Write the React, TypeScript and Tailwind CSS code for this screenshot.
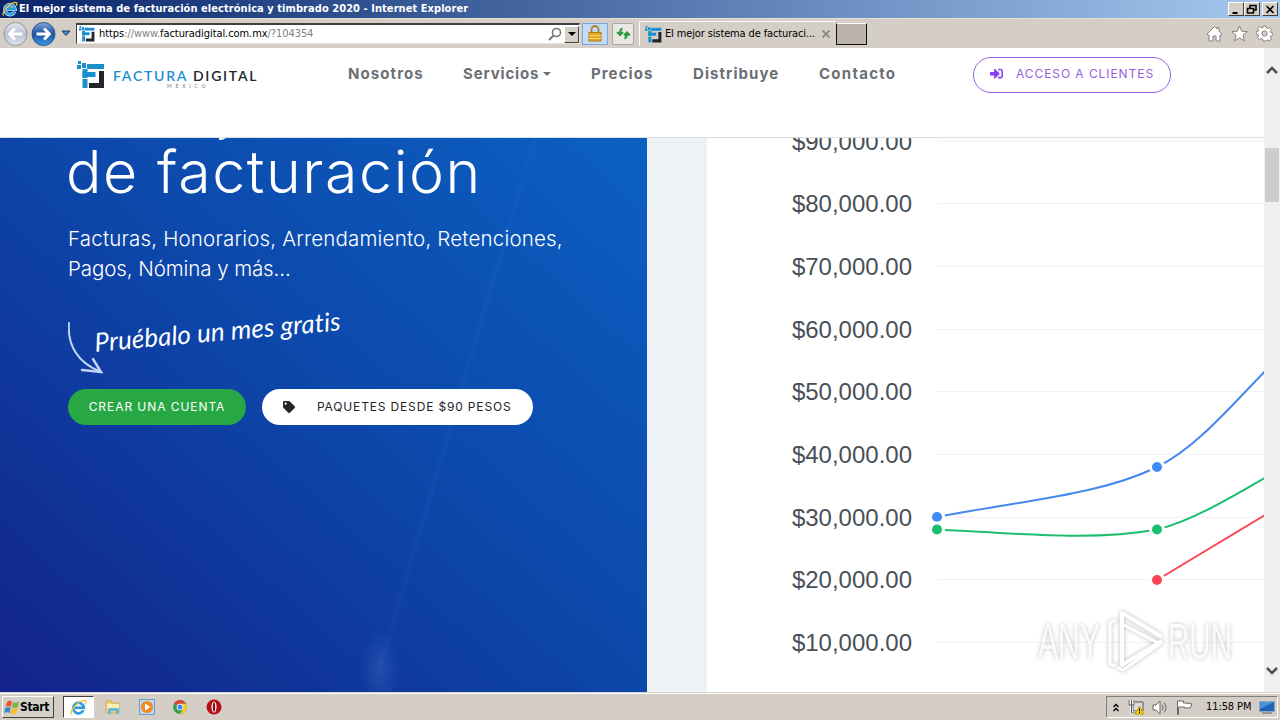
import type { ReactNode } from 'react';
import { FaSignInAlt, FaTag } from 'react-icons/fa';

const UI_FONT = 'font-["DejaVu_Sans_Condensed","DejaVu_Sans",sans-serif]';

const Y_LABELS = [
  { text: '$90,000.00', y: 141.6 },
  { text: '$80,000.00', y: 203.5 },
  { text: '$70,000.00', y: 266.5 },
  { text: '$60,000.00', y: 329.5 },
  { text: '$50,000.00', y: 391.5 },
  { text: '$40,000.00', y: 454.5 },
  { text: '$30,000.00', y: 517.5 },
  { text: '$20,000.00', y: 579.5 },
  { text: '$10,000.00', y: 642.5 },
];

const POINTS = [
  { x: 937, y: 517, color: '#3f8cf4' },
  { x: 1157, y: 467, color: '#3f8cf4' },
  { x: 937, y: 529.5, color: '#1bbf6b' },
  { x: 1157, y: 529.5, color: '#1bbf6b' },
  { x: 1157, y: 580, color: '#fb4557' },
];

function LogoMark({ size }: { size: number }) {
  return (
    <svg width={size} height={size} viewBox="0 0 28 28" className="shrink-0">
      <g fill="#1a8fd0">
        <rect x="1" y="0" width="3" height="3" />
        <rect x="0" y="4" width="4" height="4" />
        <rect x="5" y="2" width="4" height="5" />
        <rect x="10" y="3" width="17" height="5" />
        <rect x="5.500" y="8" width="5" height="9" />
        <rect x="5.500" y="11" width="13" height="5" />
        <rect x="5.500" y="18" width="5" height="9" />
      </g>
      <path d="M22 10h5v17H12v-5h10z" fill="#222529" />
    </svg>
  );
}

function IeLogo({ size }: { size: number }) {
  return (
    <svg width={size} height={size} viewBox="0 0 16 16" className="shrink-0">
      <path d="M12.6 10.6A5 5 0 1 1 13 8.2H4.5" fill="none" stroke="#dff3ff" strokeWidth="3.6" />
      <path d="M12.6 10.6A5 5 0 1 1 13 8.2H4.5" fill="none" stroke="#2c9be0" strokeWidth="2.4" />
      <path d="M1.6 14.6C-.8 12 7.400 1.500 13.500 1.300c2-.1 1.600 2 .8 3.400" fill="none" stroke="#f4c430" strokeWidth="1.300" />
    </svg>
  );
}

function WindowButton({ children }: { children: ReactNode }) {
  return (
    <button className="flex h-[14px] w-4 items-center justify-center border border-t-white border-l-white border-r-[#404040] border-b-[#404040] bg-[#d4d0c8]">
      <svg width="12" height="11" viewBox="0 0 12 11" fill="none" stroke="#000" strokeWidth="1.6">
        {children}
      </svg>
    </button>
  );
}

function TitleBar() {
  return (
    <div className="flex h-[18px] items-center bg-linear-to-r from-[#0a246a] to-[#a6caf0] pr-[2px] pl-[2px]">
      <IeLogo size={16} />
      <span className="ml-px text-[11px] font-bold tracking-[0.060px] whitespace-nowrap text-white">
        El mejor sistema de facturación electrónica y timbrado 2020 - Internet Explorer
      </span>
      <div className="ml-auto flex">
        <WindowButton>
          <path d="M2.500 9h5" strokeWidth="2" />
        </WindowButton>
        <WindowButton>
          <path d="M4 4V1.500h6V6H8M1.500 4.500h6v4.500h-6z" />
        </WindowButton>
        <div className="w-[2px]" />
        <WindowButton>
          <path d="M2.500 2l7 7M9.500 2l-7 7" />
        </WindowButton>
      </div>
    </div>
  );
}

function NavCircle({ active, flip }: { active?: boolean; flip?: boolean }) {
  return (
    <svg width="25" height="26" viewBox="0 0 25 26" className="shrink-0">
      <defs>
        <linearGradient id={active ? 'navOn' : 'navOff'} x1="0" y1="0" x2="0" y2="1">
          <stop offset="0" stopColor={active ? '#7fa5dc' : '#e4e8ee'} />
          <stop offset=".5" stopColor={active ? '#1c4fa4' : '#b9c2cf'} />
          <stop offset="1" stopColor={active ? '#3c9be8' : '#dfe5ec'} />
        </linearGradient>
      </defs>
      <circle cx="12.500" cy="13" r="11.500" fill={active ? 'url(#navOn)' : 'url(#navOff)'} stroke={active ? '#33558c' : '#8e959e'} />
      <g transform={flip ? 'translate(25 0) scale(-1 1)' : undefined}>
        <path d="M5.500 13h13M13 7.500l5.500 5.500-5.500 5.500" fill="none" stroke="#fff" strokeWidth="2.800" />
      </g>
    </svg>
  );
}

function Toolbar() {
  return (
    <div className="flex h-[30px] items-center border-t border-[#e4e0d8] bg-[#d4cec6] text-[11px] text-black">
      <div className="flex w-[76px] items-center pl-[3px]">
        <NavCircle flip />
        <div className="w-[3px]" />
        <NavCircle active />
        <svg width="10" height="7" viewBox="0 0 10 7" className="ml-[5px]">
          <path d="M1 1h8L5 5.500z" fill="#4d8fc4" stroke="#123a66" />
        </svg>
      </div>
      <div className="flex h-[21px] w-[504px] items-center border border-t-2 border-[#404040] border-r-[#e8e4dc] border-b-[#e8e4dc] bg-white pl-[2px]">
        <LogoMark size={16} />
        <span className="ml-[4px] tracking-[-0.07px] whitespace-nowrap text-[#808080]">
          <span className="text-black">https</span>://www.<span className="text-black">facturadigital.com.mx</span>/?104354
        </span>
        <svg width="14" height="14" viewBox="0 0 14 14" className="ml-auto" fill="none" stroke="#777">
          <circle cx="8.500" cy="5.500" r="4" strokeWidth="1.600" />
          <path d="M5.500 8.500L1 13" strokeWidth="2" />
        </svg>
        <div className="ml-[2px] flex h-[17px] w-[15px] items-center justify-center border border-t-white border-l-white border-r-[#404040] border-b-[#404040] bg-[#d4d0c8]">
          <div className="border-x-4 border-t-4 border-x-transparent border-t-black" />
        </div>
      </div>
      <div className="ml-[2px] flex h-[22px] w-[26px] items-center justify-center border border-[#7aa7dc] bg-[#c5daf3]">
        <svg width="14" height="17" viewBox="0 0 14 17">
          <path d="M3.500 8V4.500a3.500 3.500 0 0 1 7 0V8" fill="none" stroke="#a98332" strokeWidth="1.800" />
          <rect x="1" y="7.500" width="12" height="8.500" fill="#e5ab20" stroke="#b37d12" />
          <path d="M1 10.500h12M1 13.500h12" stroke="#f9d36b" />
        </svg>
      </div>
      <div className="ml-1 flex h-[22px] w-[22px] items-center justify-center rounded-[2px] border border-[#aaa7a1] bg-[#e9e8e5]">
        <svg width="15" height="13" viewBox="0 0 15 13" fill="none" stroke="#2f9a3d" strokeWidth="2">
          <path d="M6.500 1.500C4.500 2 4 3 4 6M1 5l3 3 3-3M8.500 11.500c2-.5 2.500-1.500 2.500-4.500M8 8.500l3-3 3 3" />
        </svg>
      </div>
      <div className="ml-[5px] flex h-[25px] w-[197px] items-center border-t border-l border-white pl-[5px]">
        <LogoMark size={17} />
        <span className="ml-[3px] tracking-[-0.130px] whitespace-nowrap">El mejor sistema de facturaci...</span>
        <svg width="8" height="8" viewBox="0 0 8 8" className="ml-auto mr-[6px]" stroke="#8a8782" strokeWidth="1.800">
          <path d="M.5.5l7 7M7.500.5l-7 7" />
        </svg>
      </div>
      <div className="h-[22px] w-[31px] border border-t-white border-r-[#111] border-b-[#111] border-l-[#111] bg-[#bcb3ab]" />
      <div className="ml-auto flex items-center gap-2 pr-[7px]">
        <svg width="17" height="17" viewBox="0 0 17 17" fill="#fff" stroke="#85817b">
          <path d="M1 9l7.500-7.500L11 4V2.500h2V6l3 3-1.500 1H14v6h-4v-5H7v5H3v-6H1.500z" />
        </svg>
        <svg width="17" height="17" viewBox="0 0 17 17" fill="#fff" stroke="#85817b">
          <path d="M8.500 1l2.200 5.200 5.500.4-4.200 3.700 1.300 5.500-4.800-3-4.800 3L5 10.300.8 6.600l5.500-.4z" />
        </svg>
        <svg width="17" height="17" viewBox="0 0 17 17" fill="#fff" stroke="#85817b">
          <path d="M7 1h3l.4 2 1.400.6 1.800-1 1.900 1.900-1.100 1.700.5 1.500 2 .4v2.300l-2 .5-.6 1.500 1.100 1.700-1.900 1.900-1.700-1.100-1.400.6L10 16H7l-.4-2-1.400-.6-1.800 1.100-1.900-1.900 1.100-1.700L2 9.400 0 9V7l2-.5.6-1.500-1.100-1.700 1.900-1.900 1.700 1.100L6.600 3z" />
          <circle cx="8.500" cy="8.500" r="2.600" fill="#d4cec6" />
        </svg>
      </div>
    </div>
  );
}

function SiteHeader() {
  return (
    <header className="flex h-[90px] items-start border-b border-[#dcdfe2] bg-white pl-[77px]">
      <div className="flex w-[271px] items-start pt-[13px]">
        <LogoMark size={28} />
        <div className="flex flex-col items-start pt-[6px] pl-[8px]">
          <span className="font-[Lato,sans-serif] text-[14px] leading-[17px] font-semibold tracking-[1.750px] whitespace-nowrap text-[#222529]">
            <span className="text-[#1a8fd0]">FACTURA</span> DIGITAL
          </span>
          <span className="-mt-px pl-[54px] font-[Lato,sans-serif] text-[5px] leading-[6px] tracking-[3.800px] text-[#777]">MÉXICO</span>
        </div>
      </div>
      <nav className="flex pt-[15px] font-[Inter,sans-serif] text-[15px] leading-[22px] font-bold tracking-[1.080px] text-[#6b7075]">
        <a className="w-[115px]">Nosotros</a>
        <a className="flex w-[128px] items-center">
          <span className="tracking-[0.850px]">Servicios</span>
          <span className="ml-[4px] border-x-[4.500px] border-t-[4.500px] border-x-transparent border-t-[#6b7075]" />
        </a>
        <a className="w-[102px]">Precios</a>
        <a className="w-[126px]">Distribuye</a>
        <a className="tracking-[1.250px]">Contacto</a>
      </nav>
      <button className="mt-[9px] mr-[93px] ml-auto flex h-9 w-[198px] items-center rounded-full border border-[#9460dc] pl-4 font-[Inter,sans-serif] text-[12px] tracking-[0.930px] whitespace-nowrap text-[#9460dc]">
        <FaSignInAlt size={13} color="#8a3ffc" className="mr-[13px] -mt-1" />
        <span className="-mt-[3px]">ACCESO A CLIENTES</span>
      </button>
    </header>
  );
}

function Hero() {
  return (
    <section className="relative h-full w-[647px] shrink-0 overflow-hidden bg-linear-[42deg,#13238a_0%,#0d46a9_50%,#0b60c2_100%] pl-[68px] font-[Inter,sans-serif] text-white">
      <svg width="647" height="554" viewBox="0 0 647 554" className="pointer-events-none absolute inset-0">
        <defs>
          <radialGradient id="glow">
            <stop offset="0" stopColor="#5c8ce0" stopOpacity=".25" />
            <stop offset="1" stopColor="#5c8ce0" stopOpacity="0" />
          </radialGradient>
        </defs>
        <path d="M535 0L488 160 380 530" fill="none" stroke="#3b82dc" strokeOpacity=".07" strokeWidth="6" />
        <ellipse cx="380" cy="532" rx="20" ry="40" fill="url(#glow)" />
      </svg>
      <h1 className="relative -mt-[67px] text-[59px] leading-[67px] font-light tracking-[1.600px] whitespace-nowrap">
        <span className="relative top-[2px] tracking-[0.100px]">El mejor sistema</span>
        <br />
        <span className="-ml-[2px]">de facturación</span>
      </h1>
      <p className="relative mt-[19px] text-[20.500px] leading-[30px] font-light tracking-[0.190px] whitespace-nowrap">
        Facturas, Honorarios, Arrendamiento, Retenciones,
        <br />
        <span className="tracking-[-0.080px]">Pagos, Nómina y más...</span>
      </p>
      <div className="relative mt-[34px] flex h-[71px] items-start">
        <svg width="36" height="56" viewBox="0 0 36 56" className="mt-[4px] shrink-0" fill="none" stroke="#bdd4f4" strokeLinecap="round">
          <path d="M1 1C-1 24 11 41 31 49" strokeWidth="2" />
          <path d="M25 37l8 13-19-2" strokeWidth="2.500" />
        </svg>
        <span className="-mt-[5px] -ml-[10px] -rotate-[5deg] font-[Lato,sans-serif] text-[26px] leading-[36px] tracking-[0.100px] italic whitespace-nowrap">
          Pruébalo un mes gratis
        </span>
      </div>
      <div className="relative flex gap-4 text-[12px] tracking-[0.940px] whitespace-nowrap">
        <button className="h-9 w-[178px] rounded-full bg-[#28a745]">CREAR UNA CUENTA</button>
        <button className="flex h-9 w-[271px] items-center rounded-full bg-white pl-[21px] tracking-[0.840px] text-[#212529]">
          <FaTag size={12} className="mr-[22px]" />
          PAQUETES DESDE $90 PESOS
        </button>
      </div>
    </section>
  );
}

function Chart() {
  return (
    <svg width="557" height="554" viewBox="707 138 557 554" className="block shrink-0 bg-white">
      {Y_LABELS.map((l) => (
        <g key={l.text}>
          <path d={`M937 ${Math.floor(l.y + 0.5) - 0.5}H1264`} stroke="#f2f2f2" />
          <text x="912" y={l.y + 8.4} textAnchor="end" fontSize="24" fill="#495057" fontFamily="Liberation Sans, sans-serif">
            {l.text}
          </text>
        </g>
      ))}
      <g fill="none" strokeWidth="2">
        <path d="M937 517C1025 500 1100 495 1157 467C1195 449 1230 407 1270 366" stroke="#4688f1" />
        <path d="M937 529.500C1025 534 1095 541 1157 529.500C1190 522 1230 498 1270 475" stroke="#1bbf6b" />
        <path d="M1157 580L1270 512" stroke="#fb4557" />
      </g>
      {POINTS.map((p) => (
        <circle key={`${p.x}-${p.y}`} cx={p.x} cy={p.y} r="6.500" fill={p.color} stroke="#fff" strokeWidth="3" />
      ))}
    </svg>
  );
}

function Watermark() {
  return (
    <svg width="210" height="76" viewBox="0 0 210 76" className="absolute top-[602px] left-[1030px] drop-shadow-[0_0_2px_#00000048]">
      <g fill="#fff" fillOpacity=".85" fontFamily="Liberation Sans, sans-serif" fontSize="50">
        <text x="8" y="57" textLength="62" lengthAdjust="spacingAndGlyphs">ANY</text>
        <text x="138" y="57" textLength="64" lengthAdjust="spacingAndGlyphs">RUN</text>
      </g>
      <g fill="none" stroke="#fff" strokeWidth="4" strokeLinejoin="round">
        <path d="M132 35L92 11v52l40-24" />
        <path d="M94 23l36 19-37 26-6-3M86 18l-6 3v41l6 2" strokeWidth="3" />
      </g>
    </svg>
  );
}

function Scrollbar() {
  return (
    <div className="flex h-full w-4 flex-col items-center bg-[#f0f0f0]">
      <svg width="12" height="8" viewBox="0 0 12 8" className="mt-[18px]" fill="none" stroke="#505050" strokeWidth="2.500">
        <path d="M1 7l5-5 5 5" />
      </svg>
      <div className="mt-[74px] h-[54px] w-[14px] bg-[#cdcdcd]" />
      <svg width="12" height="8" viewBox="0 0 12 8" className="mt-auto mb-[17px]" fill="none" stroke="#505050" strokeWidth="2.500">
        <path d="M1 1l5 5 5-5" />
      </svg>
    </div>
  );
}

function Taskbar() {
  return (
    <footer className="flex h-7 items-center border-t border-[#d4d0c8] bg-[#d4cec6] pr-[2px] pl-[2px] text-[11px] text-black shadow-[inset_0_1px_0_#fff]">
      <button className="mt-px flex h-[22px] w-[52px] items-center border border-t-white border-l-white border-r-[#404040] border-b-[#404040] bg-[#d4d0c8] pl-px font-bold">
        <svg width="16" height="15" viewBox="0 0 16 15" className="shrink-0">
          <path d="M3 2q2-2 5-.5L7 7Q4 5 1.500 7z" fill="#e8562a" />
          <path d="M9 2q3 1.500 6-.5L14 7q-3 2-6 .5z" fill="#7ab648" />
          <path d="M1.200 8q3-2 5.500 0l-1 5Q3 11.500 0 13z" fill="#3b87d0" />
          <path d="M7.700 8.500q3 1.500 6-.5l-1.200 5q-3 2-6 .5z" fill="#f8c022" />
        </svg>
        <span className="text-[12px] tracking-[-0.300px]">Start</span>
      </button>
      <div className="mt-px ml-[9px] flex h-[22px] w-[31px] items-center justify-center border border-t-[#404040] border-l-[#404040] border-r-white border-b-white bg-white">
        <IeLogo size={17} />
      </div>
      <div className="ml-[11px] flex items-center gap-[18px]">
        <svg width="16" height="16" viewBox="0 0 16 16">
          <path d="M1 2h5l1 2h7v10H1z" fill="#efd37a" stroke="#cfae50" />
          <path d="M2 5h12v5H2z" fill="#fbeeb2" />
          <path d="M3 15v-4q0-2 2-2h7q2 0 2 2v4h-3v-3H6v3z" fill="#67b4dc" />
        </svg>
        <svg width="16" height="16" viewBox="0 0 16 16">
          <rect x=".5" y=".5" width="15" height="15" fill="#bdd9f1" stroke="#6c9dcc" />
          <circle cx="8" cy="8" r="6" fill="#f28a1c" />
          <path d="M6 4.500v7L11.500 8z" fill="#fff" />
        </svg>
        <svg width="14" height="14" viewBox="0 0 14 14">
          <circle cx="7" cy="7" r="7" fill="#34a350" />
          <path d="M7 7L1 3.500A7 7 0 0 1 13.100 3.700H7z" fill="#dc4437" />
          <path d="M7 3.700h6.100A7 7 0 0 1 7 14l3-5z" fill="#fbc926" />
          <circle cx="7" cy="7" r="3.300" fill="#fff" />
          <circle cx="7" cy="7" r="2.500" fill="#4385f0" />
        </svg>
        <svg width="16" height="16" viewBox="0 0 16 16" className="ml-px">
          <circle cx="8" cy="8" r="7.500" fill="#b51015" />
          <ellipse cx="8" cy="8" rx="2.500" ry="5.500" fill="#fff" />
          <ellipse cx="8" cy="8" rx="1.200" ry="4.700" fill="#8d0c10" />
        </svg>
      </div>
      <div className="mt-px ml-auto flex h-[22px] w-[172px] items-center border border-t-[#808080] border-l-[#808080] border-r-white border-b-white pl-[6px]">
        <svg width="6" height="9" viewBox="0 0 6 9" fill="none" stroke="#000" strokeWidth="1.300">
          <path d="M.5 4L3 1.500 5.500 4M.5 8L3 5.500 5.500 8" />
        </svg>
        <svg width="17" height="16" viewBox="0 0 17 16" className="ml-[9px]">
          <path d="M5 3h10v9H5z" fill="#ddd" stroke="#555" />
          <path d="M1.500 1v4h4V1M3.500 5v9H8" fill="none" stroke="#fff" strokeWidth="2.500" />
          <path d="M1 1v5h5V1M3.500 1v13H8" fill="none" stroke="#555" />
          <path d="M11.500 7l4.500 8H7z" fill="#f7d117" stroke="#c79b00" />
          <path d="M11.500 9.500v3M11.500 13v1" stroke="#000" />
        </svg>
        <svg width="17" height="15" viewBox="0 0 17 15" className="ml-[7px]" fill="none" stroke="#666">
          <path d="M1 5h3l4-4v13l-4-4H1z" fill="#fff" />
          <path d="M10 4.500q2 3 0 6M12 2.500q4 5 0 10" />
        </svg>
        <svg width="17" height="15" viewBox="0 0 17 15" className="ml-[7px]" fill="#fff" stroke="#666">
          <path d="M1.500 14.500V1h6v2H10l6 1-2 4H8.500V7h-6v7.500z" />
        </svg>
        <span className="ml-[13px] tracking-[-0.100px] whitespace-nowrap">11:58 PM</span>
        <svg width="16" height="13" viewBox="0 0 16 13" className="ml-[8px]">
          <rect x=".5" y=".5" width="15" height="10" fill="#1f62b8" stroke="#8fa6bf" />
          <path d="M1 1h14L1 8z" fill="#4a90da" />
          <path d="M3 12h10" stroke="#52606e" />
        </svg>
      </div>
    </footer>
  );
}

export default function App() {
  return (
    <div className={`relative flex h-[720px] w-[1280px] flex-col overflow-hidden bg-white ${UI_FONT}`}>
      <TitleBar />
      <Toolbar />
      <div className="flex h-[644px]">
        <main className="flex w-[1264px] flex-col">
          <SiteHeader />
          <div className="flex h-[554px] overflow-hidden">
            <Hero />
            <div className="w-[60px] shrink-0 bg-[#eff2f4]" />
            <Chart />
          </div>
        </main>
        <Scrollbar />
      </div>
      <Taskbar />
      <Watermark />
    </div>
  );
}
